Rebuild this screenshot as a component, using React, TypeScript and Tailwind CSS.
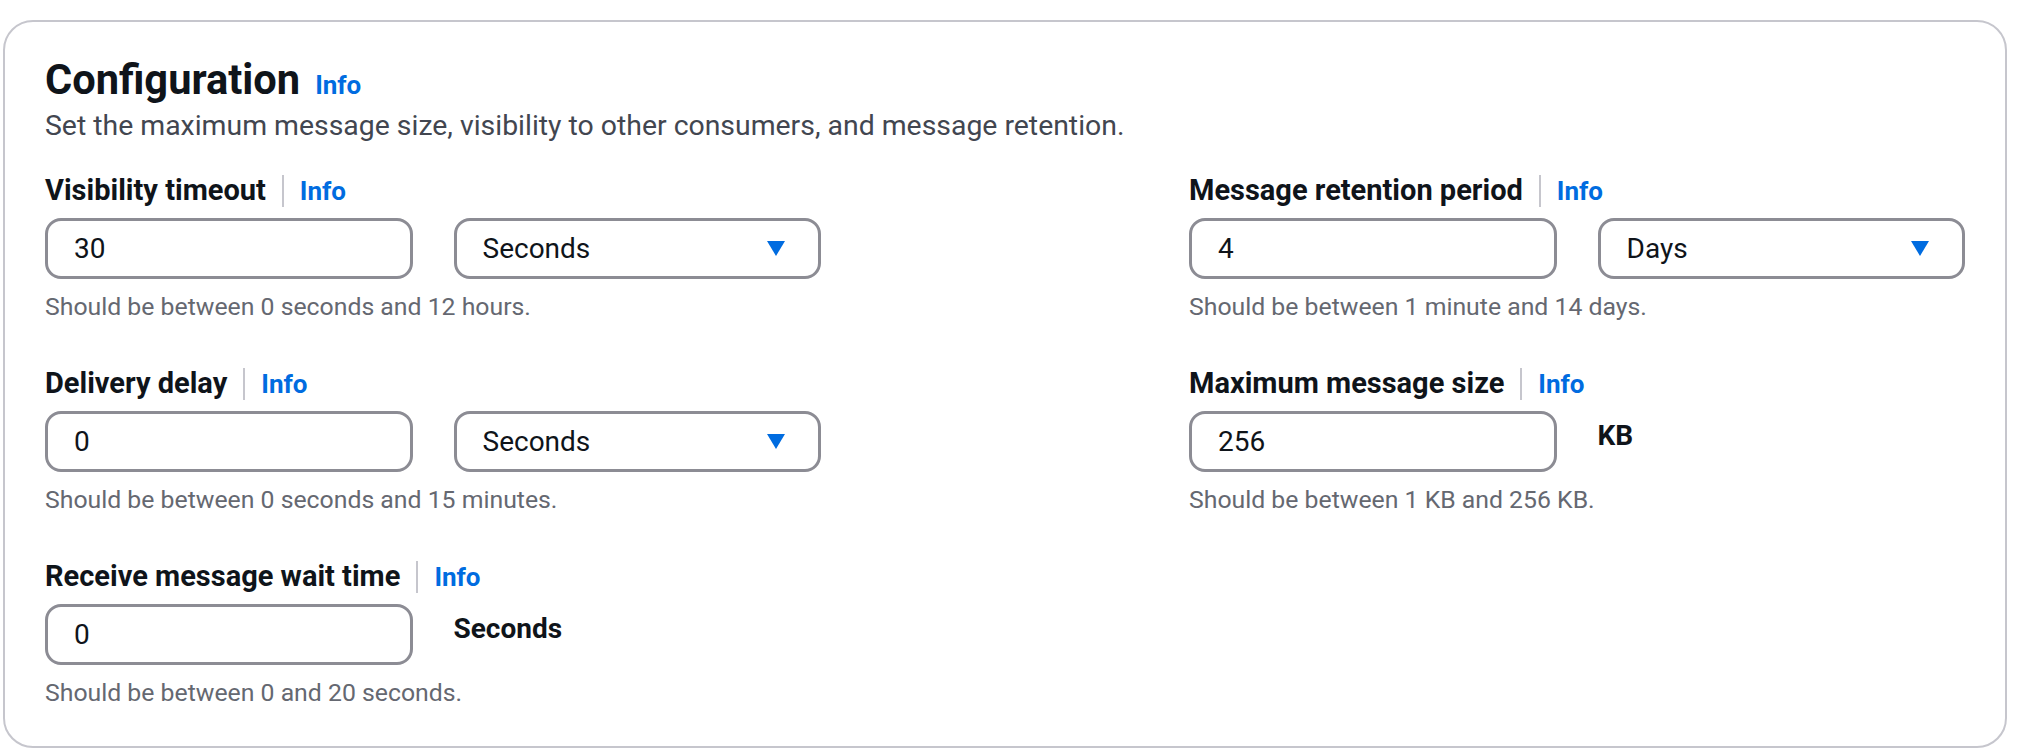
function InfoLink() {
  return <a className="text-[26px] font-bold leading-[32px] text-[#006ce0] cursor-pointer">Info</a>;
}

function Label({ text }: { text: string }) {
  return (
    <div className="flex items-center h-[44px]">
      <span className="text-[29px] font-bold text-[#0f141a]">{text}</span>
      <span className="mx-[16px] h-[32px] w-[2px] bg-[#c6c6cd]" />
      <InfoLink />
    </div>
  );
}

function TextBox({ value }: { value: string }) {
  return (
    <div className="h-[61px] rounded-[16px] border-[3px] border-[#8c8c94] bg-white px-[26px] flex items-center text-[28px] text-[#0f141a]">
      {value}
    </div>
  );
}

function Select({ value }: { value: string }) {
  return (
    <div className="h-[61px] rounded-[16px] border-[3px] border-[#8c8c94] bg-white pl-[26px] pr-[33px] flex items-center justify-between text-[28px] text-[#0f141a]">
      <span>{value}</span>
      <svg width="18" height="15" viewBox="0 0 18 15">
        <path d="M0 0 H18 L9 15 Z" fill="#006ce0" />
      </svg>
    </div>
  );
}

function Field({
  label,
  value,
  unit,
  select,
  help,
}: {
  label: string;
  value: string;
  unit: string;
  select?: boolean;
  help: string;
}) {
  return (
    <div>
      <Label text={label} />
      <div className="mt-[5px] grid grid-cols-2 gap-x-[41px]">
        <TextBox value={value} />
        {select ? (
          <Select value={unit} />
        ) : (
          <div className="pt-[3px] text-[28px] font-bold leading-[44px] text-[#0f141a]">{unit}</div>
        )}
      </div>
      <p className="mt-[12px] text-[24.8px] leading-[32px] text-[#656871]">{help}</p>
    </div>
  );
}

export default function App() {
  return (
    <div className="min-h-screen bg-white pl-[3px] pr-[13px] pt-[20px] font-[family-name:Roboto,sans-serif]">
      <div className="rounded-[30px] border-2 border-[#c6c6cd] bg-white px-[40px] pt-[34px] pb-[37px]">
        <div className="flex items-baseline gap-[15px] leading-[48px]">
          <h2 className="text-[41.6px] font-bold text-[#0f141a]">Configuration</h2>
          <InfoLink />
        </div>
        <p className="mt-[2px] text-[28.4px] leading-[40px] text-[#424650]">
          Set the maximum message size, visibility to other consumers, and message retention.
        </p>
        <div className="mt-[23px] grid grid-cols-2 gap-x-[368px] gap-y-[39px]">
          <Field label="Visibility timeout" value="30" unit="Seconds" select help="Should be between 0 seconds and 12 hours." />
          <Field label="Message retention period" value="4" unit="Days" select help="Should be between 1 minute and 14 days." />
          <Field label="Delivery delay" value="0" unit="Seconds" select help="Should be between 0 seconds and 15 minutes." />
          <Field label="Maximum message size" value="256" unit="KB" help="Should be between 1 KB and 256 KB." />
          <Field label="Receive message wait time" value="0" unit="Seconds" help="Should be between 0 and 20 seconds." />
        </div>
      </div>
    </div>
  );
}
